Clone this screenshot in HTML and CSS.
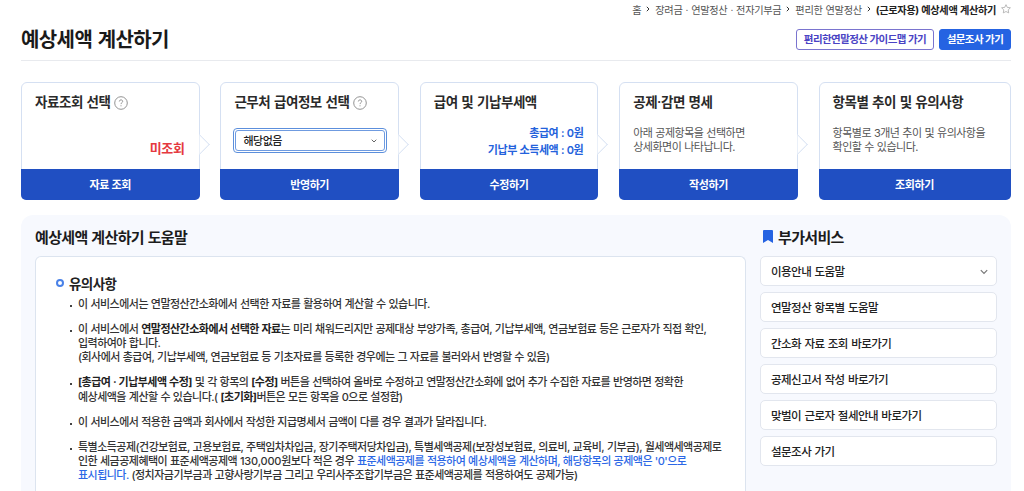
FILE: index.html
```html
<!DOCTYPE html>
<html lang="ko">
<head>
<meta charset="utf-8">
<title>예상세액 계산하기</title>
<link rel="stylesheet" href="styles.css">
</head>
<body>
<div class="page">
  <nav class="crumbs">
    <span>홈</span>
    <svg class="sep" viewBox="0 0 4 6"><path d="M.8.8 3 3 .8 5.2"/></svg>
    <span>장려금 · 연말정산 · 전자기부금</span>
    <svg class="sep" viewBox="0 0 4 6"><path d="M.8.8 3 3 .8 5.2"/></svg>
    <span>편리한 연말정산</span>
    <svg class="sep" viewBox="0 0 4 6"><path d="M.8.8 3 3 .8 5.2"/></svg>
    <strong>(근로자용) 예상세액 계산하기</strong>
    <svg class="star" viewBox="0 0 10 10"><path d="M5 .7 6.3 3.4 9.4 3.8 7.2 5.9 7.7 8.9 5 7.5 2.3 8.9 2.8 5.9.6 3.8 3.7 3.4Z"/></svg>
  </nav>
  <header class="head">
    <h1>예상세액 계산하기</h1>
    <div class="actions">
      <button class="btn outline"><span>편리한연말정산 가이드맵 가기</span></button>
      <button class="btn solid"><span>설문조사 가기</span></button>
    </div>
  </header>

  <section class="steps">
    <article class="card next">
      <h2><span>자료조회 선택</span><svg class="help" viewBox="0 0 14 14"><circle cx="7" cy="7" r="6.3"/><path d="M5.3 5.5C5.3 3.3 8.7 3.4 8.7 5.4 8.7 6.7 7 6.6 7 8.1M7 9.3V10.3"/></svg></h2>
      <p class="unseen">미조회</p>
      <button class="go">자료 조회</button>
    </article>
    <article class="card next">
      <h2><span>근무처 급여정보 선택</span><svg class="help" viewBox="0 0 14 14"><circle cx="7" cy="7" r="6.3"/><path d="M5.3 5.5C5.3 3.3 8.7 3.4 8.7 5.4 8.7 6.7 7 6.6 7 8.1M7 9.3V10.3"/></svg></h2>
      <div class="select"><div class="select-in"><span>해당없음</span><svg viewBox="0 0 6 4"><path d="M.7.7 3 3 5.3.7"/></svg></div></div>
      <button class="go">반영하기</button>
    </article>
    <article class="card next">
      <h2><span>급여 및 기납부세액</span></h2>
      <p class="amounts">총급여 : 0원<br>기납부 소득세액 : 0원</p>
      <button class="go">수정하기</button>
    </article>
    <article class="card next">
      <h2><span>공제·감면 명세</span></h2>
      <p class="desc">아래 공제항목을 선택하면<br>상세화면이 나타납니다.</p>
      <button class="go">작성하기</button>
    </article>
    <article class="card">
      <h2><span>항목별 추이 및 유의사항</span></h2>
      <p class="desc">항목별로 3개년 추이 및 유의사항을<br>확인할 수 있습니다.</p>
      <button class="go">조회하기</button>
    </article>
  </section>

  <section class="help-area">
    <main class="guide">
      <h3>예상세액 계산하기 도움말</h3>
      <div class="panel">
        <h4>유의사항</h4>
        <ul>
          <li>이 서비스에서는 연말정산간소화에서 선택한 자료를 활용하여 계산할 수 있습니다.</li>
          <li>이 서비스에서 <b>연말정산간소화에서 선택한 자료</b>는 미리 채워드리지만 공제대상 부양가족, 총급여, 기납부세액, 연금보험료 등은 근로자가 직접 확인,<br>입력하여야 합니다.<br>(회사에서 총급여, 기납부세액, 연금보험료 등 기초자료를 등록한 경우에는 그 자료를 불러와서 반영할 수 있음)</li>
          <li><b>[총급여 · 기납부세액 수정]</b> 및 각 항목의 <b>[수정]</b> 버튼을 선택하여 올바로 수정하고 연말정산간소화에 없어 추가 수집한 자료를 반영하면 정확한<br>예상세액을 계산할 수 있습니다.( <b>[초기화]</b>버튼은 모든 항목을 0으로 설정함)</li>
          <li>이 서비스에서 적용한 금액과 회사에서 작성한 지급명세서 금액이 다를 경우 결과가 달라집니다.</li>
          <li>특별소득공제(건강보험료, 고용보험료, 주택임차차입금, 장기주택저당차입금), 특별세액공제(보장성보험료, 의료비, 교육비, 기부금), 월세액세액공제로<br>인한 세금공제혜택이 표준세액공제액 <span class="num">130,000</span>원보다 적은 경우 <em>표준세액공제를 적용하여 예상세액을 계산하며, 해당항목의 공제액은 '0'으로<br>표시됩니다.</em> (정치자금기부금과 고향사랑기부금 그리고 우리사주조합기부금은 표준세액공제를 적용하여도 공제가능)</li>
        </ul>
      </div>
    </main>
    <aside class="extras">
      <h3><svg class="mark" viewBox="0 0 10 13"><path d="M0 1Q0 0 1 0H9Q10 0 10 1V13L5 10 0 13Z"/></svg><span>부가서비스</span></h3>
      <a class="link">이용안내 도움말<svg class="chev" viewBox="0 0 8 6"><path d="M.8 1.2 4 4.4 7.2 1.2"/></svg></a>
      <a class="link">연말정산 항목별 도움말</a>
      <a class="link">간소화 자료 조회 바로가기</a>
      <a class="link">공제신고서 작성 바로가기</a>
      <a class="link">맞벌이 근로자 절세안내 바로가기</a>
      <a class="link">설문조사 가기</a>
    </aside>
  </section>
</div>
</body>
</html>
```
FILE: styles.css
```css
*, *::before, *::after { box-sizing: border-box; }
html, body { margin: 0; height: 491px; overflow: hidden; background: #fff; }
body, button { font-family: Inter, "Noto Sans CJK KR", sans-serif; }
body { color: #222; font-size: 11px; white-space: nowrap; }
h1, h2, h3, h4, p, ul { margin: 0; padding: 0; }
svg { flex: none; fill: none; }
.page { padding: 0 13px 0 21px; }

.crumbs { height: 18px; display: flex; align-items: center; justify-content: flex-end; gap: 5px; color: #555; font-size: 10.2px; letter-spacing: -0.32px; word-spacing: .5px; }
.crumbs strong { color: #222; font-weight: 700; letter-spacing: -0.36px; }
.sep { width: 4px; height: 6px; stroke: #333; stroke-width: 1; }
.star { width: 10px; height: 10px; stroke: #aaa; stroke-width: .8; }

.head { height: 43px; padding-top: 1px; display: flex; justify-content: space-between; align-items: center; border-bottom: 1px solid #e8eaee; }
h1 { font-size: 20px; line-height: 40px; padding-top: 1px; font-weight: 600; letter-spacing: -0.6px; word-spacing: 1px; color: #1a1a1a; }
.actions { display: flex; gap: 5px; }
.btn { height: 21px; border-radius: 3px; padding: 0; font-size: 10.5px; font-weight: 600; letter-spacing: -0.57px; line-height: 19px; white-space: nowrap; }
.outline { width: 138px; border: 1px solid #7a74cf; background: #fff; color: #4a43c4; }
.solid { width: 72px; border: 1px solid #2563e2; background: #2563e2; color: #fff; }

.steps { margin-top: 21px; display: grid; grid-template-columns: repeat(4, 178.5px) 192px; gap: 20.9px; width: 990px; }
.card { position: relative; height: 118px; border: 1px solid #d5e0f2; border-radius: 6px; display: flex; flex-direction: column; }
.card h2 { height: 38px; padding: 0 13px 2px; display: flex; align-items: center; gap: 4px; font-size: 13.5px; font-weight: 600; letter-spacing: -0.45px; word-spacing: .7px; color: #2a2a2a; }
.help { width: 14px; height: 14px; margin-top: 3px; stroke: #888; stroke-width: .9; }
.go { margin: auto -1px -1px; height: 31px; flex: none; border: 0; padding: 0 0 1px; border-radius: 0 0 5px 5px; background: #204fc2; color: #fff; font-size: 11px; font-weight: 600; letter-spacing: -0.4px; }
.next::after { content: ""; position: absolute; right: -8px; top: 54px; width: 15px; height: 15px; background: #fff; border: solid #d5e0f2; border-width: 1px 1px 0 0; transform: rotate(45deg); clip-path: polygon(0 0, 100% 0, 100% 100%); }
.unseen { margin: 16px 14px 0; text-align: right; color: #e5393f; font-weight: 600; font-size: 13px; line-height: 22px; letter-spacing: -0.4px; }
.select { margin: 7px 11px 0 12px; height: 25px; border: 1px solid #5c8fdc; border-radius: 4px; padding: 1px; }
.select-in { height: 100%; border: 1px solid #6f9be0; border-radius: 3px; display: flex; align-items: center; justify-content: space-between; padding: 0 7px 2px; letter-spacing: -0.5px; font-size: 11px; font-weight: 500; }
.select-in svg { width: 6px; height: 4px; margin-top: 2px; stroke: #555; stroke-width: .9; }
.amounts { margin: 4px 14px 0; text-align: right; color: #2462dc; font-weight: 600; line-height: 16.5px; letter-spacing: -0.47px; word-spacing: .5px; }
.desc { margin: 5px 13px 0; color: #555; line-height: 14px; letter-spacing: -0.5px; word-spacing: .3px; }

.help-area { margin-top: 15px; width: 990px; height: 276px; background: #f7f9fe; border-radius: 12px 12px 0 0; padding: 0 14px; display: grid; grid-template-columns: 711px 237px; gap: 14px; }
h3 { height: 41px; padding-top: 1px; display: flex; align-items: center; font-size: 15px; font-weight: 600; letter-spacing: -0.65px; word-spacing: .6px; color: #1c1c1c; }
.guide { width: 711px; }
.panel { height: 235px; border: 1px solid #dce4ef; border-bottom: 0; border-radius: 6px 6px 0 0; background: #fff; padding: 14px 0 0 20px; }
h4 { height: 26px; padding-bottom: 2px; display: flex; align-items: center; gap: 5px; font-size: 13.5px; font-weight: 600; letter-spacing: -0.6px; }
h4::before { content: ""; width: 8px; height: 8px; border: 2px solid #4a82e8; border-radius: 50%; }
ul { list-style: none; padding-left: 22px; display: grid; gap: 10.8px; }
li { position: relative; line-height: 14.2px; font-weight: 500; letter-spacing: -0.53px; word-spacing: .45px; color: #333; }
li::before { content: ""; position: absolute; left: -8px; top: 8px; width: 2px; height: 2px; background: #444; }
b { font-weight: 700; color: #222; }
em { font-style: normal; color: #2c68e6; }
.num { letter-spacing: -0.2px; }

.extras { display: flex; flex-direction: column; }
.extras h3 { padding-left: 3px; gap: 5px; }
.mark { width: 10px; height: 13px; margin-top: 1px; fill: #2563e2; }
.link { height: 30px; margin-bottom: 6.1px; border: 1px solid #e2e6ee; border-radius: 5px; background: #fff; display: flex; align-items: center; justify-content: space-between; padding: 0 8px 1px 10px; font-size: 11.5px; font-weight: 500; letter-spacing: -0.52px; word-spacing: .7px; color: #222; }
.chev { width: 8px; height: 6px; margin-top: 2px; stroke: #777; stroke-width: 1.2; }
```
